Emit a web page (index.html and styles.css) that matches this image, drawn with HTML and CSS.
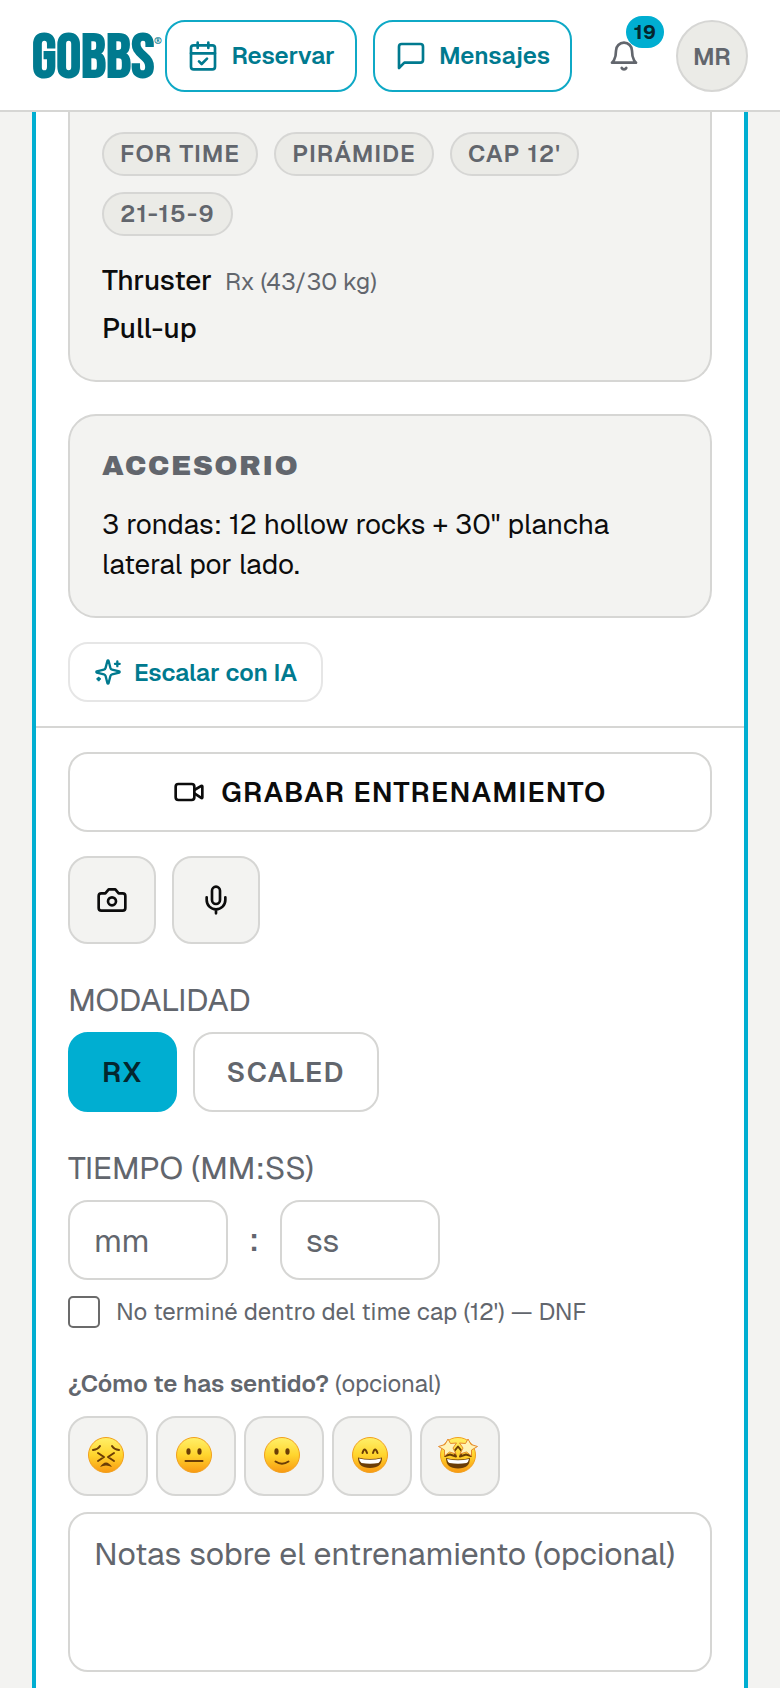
FILE: index.html
```html
<!DOCTYPE html>
<html lang="es">
<head>
  <meta charset="UTF-8" />
  <meta name="viewport" content="width=device-width, initial-scale=1.0"/>
  <title>GOBBS - Entrenamiento</title>
  <link rel="stylesheet" href="styles.css">
</head>
<body>
  <header class="topbar">
    <a class="logo" href="#" aria-label="GOBBS">GOBBS<span class="logo-mark">®</span></a>
    <nav class="topbar-nav">
      <a class="nav-btn" href="#reservar">
        <svg class="icon" viewBox="0 0 24 24"><path d="M8 2v4M16 2v4M3 10h18M9 16l2 2 4-4"/><rect x="3" y="4" width="18" height="18" rx="2"/></svg>
        Reservar
      </a>
      <a class="nav-btn" href="#mensajes">
        <svg class="icon" viewBox="0 0 24 24"><path d="M21 15a2 2 0 0 1-2 2H7l-4 4V5a2 2 0 0 1 2-2h14a2 2 0 0 1 2 2z"/></svg>
        Mensajes
      </a>
      <button class="bell-btn" type="button" aria-label="Notificaciones">
        <svg class="icon" viewBox="0 0 24 24"><path d="M6 8a6 6 0 0 1 12 0c0 7 3 9 3 9H3s3-2 3-9"/><path d="M10.3 21a1.94 1.94 0 0 0 3.4 0"/></svg>
        <span class="badge">19</span>
      </button>
      <button class="avatar" type="button">MR</button>
    </nav>
  </header>

  <main class="workout">
    <div class="workout-body">
      <section class="block block-main">
        <ul class="chips">
          <li class="chip">FOR TIME</li>
          <li class="chip">PIRÁMIDE</li>
          <li class="chip">CAP 12'</li>
          <li class="chip">21-15-9</li>
        </ul>
        <ul class="moves">
          <li>Thruster <span class="load">Rx (43/30 kg)</span></li>
          <li>Pull-up</li>
        </ul>
      </section>

      <section class="block">
        <h2 class="block-title">ACCESORIO</h2>
        <p class="block-text">3 rondas: 12 hollow rocks + 30" plancha lateral por lado.</p>
      </section>

      <button class="ai-btn" type="button">
        <svg class="icon" viewBox="0 0 24 24"><path d="M9.937 15.5A2 2 0 0 0 8.5 14.063l-6.135-1.582a.5.5 0 0 1 0-.962L8.5 9.936A2 2 0 0 0 9.937 8.5l1.582-6.135a.5.5 0 0 1 .963 0L14.063 8.5A2 2 0 0 0 15.5 9.937l6.135 1.581a.5.5 0 0 1 0 .964L15.5 14.063a2 2 0 0 0-1.437 1.437l-1.582 6.135a.5.5 0 0 1-.963 0z"/><path d="M20 3v4M22 5h-4M4 17v2M5 18H3"/></svg>
        Escalar con IA
      </button>
    </div>

    <form class="log">
      <button class="record-btn" type="button">
        <svg class="icon" viewBox="0 0 24 24"><path d="m16 13 5.223 3.482a.5.5 0 0 0 .777-.416V7.87a.5.5 0 0 0-.752-.432L16 10.5"/><rect x="2" y="6" width="14" height="12" rx="2"/></svg>
        GRABAR ENTRENAMIENTO
      </button>

      <div class="media">
        <button class="media-btn" type="button" aria-label="Foto">
          <svg class="icon" viewBox="0 0 24 24"><path d="M14.5 4h-5L7 7H4a2 2 0 0 0-2 2v9a2 2 0 0 0 2 2h16a2 2 0 0 0 2-2V9a2 2 0 0 0-2-2h-3l-2.5-3z"/><circle cx="12" cy="13" r="3"/></svg>
        </button>
        <button class="media-btn" type="button" aria-label="Nota de voz">
          <svg class="icon" viewBox="0 0 24 24"><path d="M12 2a3 3 0 0 0-3 3v7a3 3 0 0 0 6 0V5a3 3 0 0 0-3-3Z"/><path d="M19 10v2a7 7 0 0 1-14 0v-2M12 19v3"/></svg>
        </button>
      </div>

      <fieldset class="field">
        <legend class="field-label">MODALIDAD</legend>
        <div class="modes">
          <button class="mode-btn active" type="button">RX</button>
          <button class="mode-btn" type="button">SCALED</button>
        </div>
      </fieldset>

      <fieldset class="field">
        <legend class="field-label">TIEMPO (MM:SS)</legend>
        <div class="time">
          <input class="time-input" type="text" inputmode="numeric" placeholder="mm" aria-label="Minutos">
          <span class="colon">:</span>
          <input class="time-input" type="text" inputmode="numeric" placeholder="ss" aria-label="Segundos">
        </div>
      </fieldset>

      <label class="dnf">
        <input class="dnf-check" type="checkbox">
        No terminé dentro del time cap (12') — DNF
      </label>

      <p class="feeling"><strong>¿Cómo te has sentido?</strong> (opcional)</p>
      <div class="faces">
        <button class="face-btn" type="button" aria-label="Muy mal">
          <svg class="face" viewBox="0 0 40 40">
            <defs>
              <linearGradient id="skin" x1="0" y1="0" x2="0" y2="1">
                <stop offset="0" stop-color="#fff06a"/>
                <stop offset=".5" stop-color="#ffd52e"/>
                <stop offset="1" stop-color="#f99a12"/>
              </linearGradient>
            </defs>
            <circle class="skin" cx="18" cy="19" r="17.5"/>
            <path class="line" d="M5 14q5-.5 7-4M31 14q-5-.5-7-4M10 17l6 4-6 4M26 17l-6 4 6 4"/>
            <path class="frown" d="M12 31q6-9 12 0-6-3-12 0z"/>
          </svg>
        </button>
        <button class="face-btn" type="button" aria-label="Regular">
          <svg class="face" viewBox="0 0 40 40">
            <circle class="skin" cx="18" cy="19" r="17.5"/>
            <ellipse class="eye" cx="12.500" cy="15.500" rx="2.100" ry="3.200"/>
            <ellipse class="eye" cx="23.500" cy="15.500" rx="2.100" ry="3.200"/>
            <path class="line" d="M9.500 25h17"/>
          </svg>
        </button>
        <button class="face-btn" type="button" aria-label="Bien">
          <svg class="face" viewBox="0 0 40 40">
            <circle class="skin" cx="18" cy="19" r="17.5"/>
            <ellipse class="eye" cx="12.500" cy="15.500" rx="2.100" ry="3.200"/>
            <ellipse class="eye" cx="23.500" cy="15.500" rx="2.100" ry="3.200"/>
            <path class="line" d="M11.500 25.500q6.500 4.500 13 0"/>
          </svg>
        </button>
        <button class="face-btn" type="button" aria-label="Muy bien">
          <svg class="face" viewBox="0 0 40 40">
            <circle class="skin" cx="18" cy="19" r="17.5"/>
            <path class="line" d="M10.500 17q2-7 4.500 0M21 17q2-7 4.500 0"/>
            <path class="mouth" d="M6 21.500q12 3 24 0 0 10.500-12 10.500T6 21.500z"/>
            <path class="teeth" d="M7 22.500q11 2.500 22 0-.5 3.500-2.500 4.500-8.500 1.500-17 0-2-1-2.500-4.500z"/>
          </svg>
        </button>
        <button class="face-btn" type="button" aria-label="Increíble">
          <svg class="face" viewBox="0 0 40 40">
            <circle class="skin" cx="18" cy="19" r="17.5"/>
            <path class="mouth" d="M6 22q12 3 24 0 0 10.500-12 10.500T6 22z"/>
            <path class="teeth" d="M7 23q11 2.500 22 0-.5 3-2.500 4-8.500 1.500-17 0-2-1-2.500-4z"/>
            <path class="line" d="M5 20l5-1.500 6 2-2-5 4-5 4 5-2 5 6-2 5 1.500"/>
            <path class="star" d="M8 3l2.500 4.500 6-.5-3.500 5 3 6-6.500-2-5 4v-6L-1.500 10.500l6.500-2z"/>
            <path class="star" d="M28 3l-2.500 4.500-6-.5 3.500 5-3 6 6.500-2 5 4v-6l6-3.500-6.500-2z"/>
          </svg>
        </button>
      </div>

      <textarea class="notes" placeholder="Notas sobre el entrenamiento (opcional)" aria-label="Notas"></textarea>
    </form>
  </main>
</body>
</html>
```
FILE: styles.css
```css
* {
  box-sizing: border-box;
}
body {
  margin: 0;
  background-color: #f3f3f1;
  color: #0c0c0c;
  font-family: Geist, Inter, "Liberation Sans", Arial, sans-serif;
  font-size: 28px;
  line-height: 40px;
}
button, input, textarea {
  font-family: inherit;
  color: inherit;
  margin: 0;
}
button {
  cursor: pointer;
  padding: 0;
}
ul {
  list-style: none;
  margin: 0;
  padding: 0;
}
.icon {
  width: 32px;
  height: 32px;
  flex: none;
  fill: none;
  stroke: currentColor;
  stroke-width: 2;
  stroke-linecap: round;
  stroke-linejoin: round;
}

/* cabecera */
.topbar {
  position: sticky;
  top: 0;
  z-index: 10;
  display: flex;
  align-items: center;
  justify-content: space-between;
  padding: 20px 32px 18px;
  background-color: #fff;
  border-bottom: 2px solid #d6d6d4;
}
.logo {
  display: flex;
  align-items: flex-start;
  padding-top: 6px;
  color: #007a8f;
  font-family: "Bebas Neue", "Liberation Sans Narrow", "DejaVu Sans Condensed", sans-serif;
  font-size: 62px;
  font-weight: bold;
  line-height: 60px;
  text-decoration: none;
}
.logo-mark {
  font-size: 10px;
  font-weight: normal;
  line-height: 24px;
}
.topbar-nav {
  display: flex;
  gap: 16px;
}
.nav-btn {
  display: flex;
  align-items: center;
  gap: 12px;
  height: 72px;
  padding: 0 20px;
  border: 2px solid #0fa9c6;
  border-radius: 20px;
  color: #007a8f;
  font-size: 24px;
  font-weight: 600;
  text-decoration: none;
}
.bell-btn {
  position: relative;
  display: flex;
  align-items: center;
  justify-content: center;
  width: 72px;
  height: 72px;
  border: none;
  background: none;
  color: #62666d;
}
.badge {
  position: absolute;
  top: -4px;
  right: -4px;
  padding: 0 8px;
  border-radius: 16px;
  background-color: #00aed1;
  color: #04262e;
  font-size: 20px;
  font-weight: 700;
  line-height: 32px;
}
.avatar {
  width: 72px;
  height: 72px;
  border: 2px solid #d6d6d4;
  border-radius: 50%;
  background-color: #ebebe7;
  color: #62666d;
  font-size: 24px;
  font-weight: 600;
}

/* tarjeta del entrenamiento */
.workout {
  margin: 0 32px;
  background-color: #fff;
  border: 4px solid #00aed1;
  border-width: 0 4px;
}
.workout-body {
  padding: 0 32px 24px;
  border-bottom: 2px solid #d6d6d4;
}
.block {
  margin-bottom: 24px;
  padding: 32px;
  border: 2px solid #d6d6d4;
  border-radius: 28px;
  background-color: #f3f3f1;
}
.block-main {
  margin-bottom: 32px;
  padding-top: 20px;
  border-top: none;
  border-radius: 0 0 28px 28px;
}
.chips {
  display: flex;
  flex-wrap: wrap;
  gap: 16px;
  margin-bottom: 24px;
}
.chip {
  padding: 0 16px;
  border: 2px solid #d6d6d4;
  border-radius: 22px;
  background-color: #ebebe7;
  color: #62666d;
  font-size: 24px;
  font-weight: 600;
  letter-spacing: 0.05em;
}
.moves {
  display: grid;
  gap: 8px;
  font-weight: 500;
}
.load {
  margin-left: 6px;
  color: #62666d;
  font-size: 24px;
  font-weight: 400;
  line-height: 24px;
}
.block-title {
  margin: 0 0 20px;
  color: #62666d;
  font-family: "Archivo Black", Inter, sans-serif;
  font-size: 28px;
  font-weight: 400;
  letter-spacing: 0.05em;
  line-height: 36px;
}
.block-text {
  margin: 0;
}
.ai-btn {
  display: flex;
  align-items: center;
  gap: 12px;
  height: 60px;
  padding: 0 24px;
  border: 2px solid #e6e6e6;
  border-radius: 20px;
  background-color: #fff;
  color: #007a8f;
  font-size: 24px;
  font-weight: 600;
}
.ai-btn .icon {
  width: 28px;
  height: 28px;
}

/* registro */
.log {
  padding: 24px 32px 16px;
}
.record-btn {
  display: flex;
  align-items: center;
  justify-content: center;
  gap: 16px;
  width: 100%;
  height: 80px;
  border: 2px solid #d6d6d4;
  border-radius: 20px;
  background-color: #fff;
  font-size: 28px;
  font-weight: 600;
  letter-spacing: 0.05em;
}
.media {
  display: flex;
  gap: 16px;
  margin: 24px 0 32px;
}
.media-btn {
  display: flex;
  align-items: center;
  justify-content: center;
  width: 88px;
  height: 88px;
  border: 2px solid #d6d6d4;
  border-radius: 20px;
  background-color: #f3f3f1;
}
.field {
  min-width: 0;
  margin: 0;
  padding: 0;
  border: none;
}
.field + .field {
  margin-top: 32px;
}
.field-label {
  margin-bottom: 8px;
  padding: 0;
  color: #62666d;
  font-size: 32px;
  line-height: 48px;
}
.modes {
  display: flex;
  gap: 16px;
}
.mode-btn {
  height: 80px;
  padding: 0 32px;
  border: 2px solid #d6d6d4;
  border-radius: 20px;
  background-color: #fff;
  color: #62666d;
  font-size: 28px;
  font-weight: 600;
  letter-spacing: 0.05em;
}
.mode-btn.active {
  border-color: #00aed1;
  background-color: #00aed1;
  color: #04262e;
}
.time {
  display: flex;
  align-items: center;
}
.time-input {
  width: 160px;
  height: 80px;
  padding: 0 24px;
  border: 2px solid #d6d6d4;
  border-radius: 20px;
  background-color: #fff;
  font-size: 32px;
}
.colon {
  width: 52px;
  color: #62666d;
  font-size: 32px;
  font-weight: 500;
  text-align: center;
}
::placeholder {
  color: #62666d;
  opacity: 1;
}
.dnf {
  display: flex;
  align-items: center;
  gap: 16px;
  margin: 16px 0 36px;
  color: #62666d;
  font-size: 24px;
  line-height: 32px;
}
.dnf-check {
  appearance: none;
  width: 32px;
  height: 32px;
  border: 2px solid #6b6b6b;
  border-radius: 5px;
  background-color: #fff;
}
.dnf-check:checked {
  background-color: #00aed1;
}
.feeling {
  margin: 0 0 12px;
  color: #62666d;
  font-size: 24px;
}
.feeling strong {
  font-weight: 600;
}
.faces {
  display: flex;
  gap: 8px;
  margin-bottom: 16px;
}
.face-btn {
  display: flex;
  align-items: center;
  justify-content: center;
  width: 80px;
  height: 80px;
  border: 2px solid #d6d6d4;
  border-radius: 20px;
  background-color: #f3f3f1;
}
.face {
  width: 40px;
  height: 40px;
  overflow: visible;
}
.skin {
  fill: url(#skin);
  stroke: #f2a01e;
}
.eye {
  fill: #6b3d06;
}
.line {
  fill: none;
  stroke: #6b3d06;
  stroke-width: 2;
  stroke-linecap: round;
  stroke-linejoin: round;
}
.mouth, .frown {
  fill: #6b3d06;
}
.teeth {
  fill: #fff;
}
.star {
  fill: #fff3b8;
  stroke: #e58a2c;
  stroke-linejoin: round;
}
.notes {
  display: block;
  width: 100%;
  height: 160px;
  padding: 16px 24px;
  border: 2px solid #d6d6d4;
  border-radius: 20px;
  background-color: #fff;
  font-size: 32px;
  line-height: 48px;
  resize: none;
}
```
